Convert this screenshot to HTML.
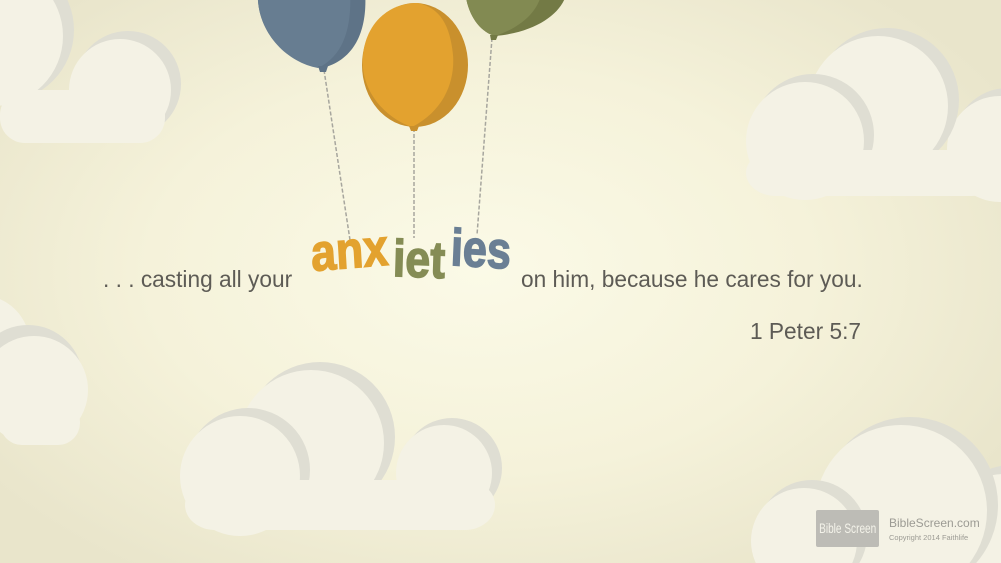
<!DOCTYPE html>
<html><head><meta charset="utf-8"><style>
html,body{margin:0;padding:0;width:1001px;height:563px;overflow:hidden}
body{position:relative;font-family:"Liberation Sans",sans-serif;
background:radial-gradient(ellipse 60% 65% at 48% 48%,#fbfae7 0%,#f5f2da 55%,#e9e5cb 100%);}
svg{position:absolute;left:0;top:0;display:block}
.t{position:absolute;color:#5d5b55;font-size:22.7px;white-space:nowrap;line-height:26px}
.w{position:absolute;font:bold 52px/52px "Liberation Sans",sans-serif;transform-origin:left center;white-space:nowrap}
</style></head><body>
<svg width="1001" height="563" viewBox="0 0 1001 563">
<defs><style>.g{fill:#dfded3}.l{fill:#f4f2e5}</style></defs>
<circle class="g" cx="128" cy="84" r="53"/><circle class="l" cx="120" cy="90" r="51"/>
<circle class="g" cx="2" cy="30" r="72"/><circle class="l" cx="-7" cy="36" r="70"/>
<rect class="l" x="0" y="90" width="165" height="53" rx="25"/>
<circle class="g" cx="1008" cy="143" r="55"/><circle class="l" cx="1000" cy="149" r="53"/>
<circle class="g" cx="887" cy="100" r="72"/><circle class="l" cx="878" cy="106" r="70"/>
<circle class="g" cx="813" cy="135" r="61"/><circle class="l" cx="805" cy="141" r="59"/>
<rect class="l" x="746" y="150" width="255" height="46" rx="30"/>
<circle class="l" cx="-20" cy="345" r="50"/>
<circle class="g" cx="28" cy="380" r="55"/><circle class="l" cx="34" cy="390" r="54"/>
<rect class="l" x="0" y="400" width="80" height="45" rx="22"/>
<circle class="g" cx="452" cy="468" r="50"/><circle class="l" cx="444" cy="473" r="48"/>
<circle class="g" cx="320" cy="437" r="75"/><circle class="l" cx="311" cy="443" r="73"/>
<circle class="g" cx="248" cy="470" r="62"/><circle class="l" cx="240" cy="476" r="60"/>
<rect class="l" x="185" y="480" width="310" height="50" rx="30"/>
<circle class="g" cx="1012" cy="530" r="65"/><circle class="l" cx="1004" cy="536" r="62"/>
<circle class="g" cx="910" cy="505" r="88"/><circle class="l" cx="901" cy="511" r="86"/>
<circle class="g" cx="812" cy="535" r="55"/><circle class="l" cx="804" cy="541" r="53"/>
<g stroke="#a7a69e" stroke-width="1.5" stroke-dasharray="4 2" fill="none">
 <path d="M324 70 L350 240"/><path d="M414 128 L414 238"/><path d="M492 38 L477 235"/>
</g>
<path d="M258 -10 C255 30 285 62 322 68 C355 60 368 30 365 -10Z" fill="#5e7387"/>
<path d="M258 -10 C255 30 285 62 318 68 C345 55 352 25 350 -10Z" fill="#677d91"/>
<path d="M318 66 l10 0 l-2 6 l-6 0Z" fill="#5e7387"/>
<ellipse cx="415" cy="65" rx="53" ry="62" fill="#c9902d"/>
<path d="M418 3 C380 3 360 35 363 68 C366 98 390 120 412 127 C445 110 455 80 453 55 C450 25 440 8 418 3Z" fill="#e3a22f"/>
<path d="M409 126 l10 0 l-2 5 l-6 0Z" fill="#c9902d"/>
<path d="M465 -10 C467 15 480 32 495 36 C540 32 565 10 567 -10Z" fill="#737a45"/>
<path d="M465 -10 C467 15 480 32 495 36 C525 26 540 8 542 -10Z" fill="#828a52"/>
<path d="M490 35 l8 0 l-2 5 l-5 0Z" fill="#737a45"/>
</svg>
<div class="t" style="left:103px;top:266px">. . . casting all your</div>
<div class="t" style="left:521px;top:266px">on him, because he cares for you.</div>
<div class="t" style="left:750px;top:318px">1 Peter 5:7</div>
<div class="w" style="left:311px;top:228px;color:#e3a22f;transform:scaleX(0.86) rotate(-4deg);-webkit-text-stroke:1.5px #e3a22f">anx</div>
<div class="w" style="left:393px;top:233px;color:#858c55;transform:scaleX(0.86) rotate(2deg);-webkit-text-stroke:1.5px #858c55">iet</div>
<div class="w" style="left:451px;top:222px;color:#6a7f94;transform:scaleX(0.83) rotate(3deg);-webkit-text-stroke:1.5px #6a7f94">ies</div>
<div style="position:absolute;left:816px;top:510px;width:63px;height:37px;background:#bdbcb6;border-radius:2px;overflow:hidden;color:#f4f3ea;font:14px/37px 'Liberation Sans',sans-serif;text-align:center;white-space:nowrap"><span style="display:inline-block;transform:scaleX(0.72);margin-left:-20px;margin-right:-20px">Bible Screen</span></div>
<div style="position:absolute;left:889px;top:516px;color:#9c9b94;font-size:12px">BibleScreen.com</div>
<div style="position:absolute;left:889px;top:533px;color:#9c9b94;font-size:7.5px">Copyright 2014 Faithlife</div>
</body></html>
